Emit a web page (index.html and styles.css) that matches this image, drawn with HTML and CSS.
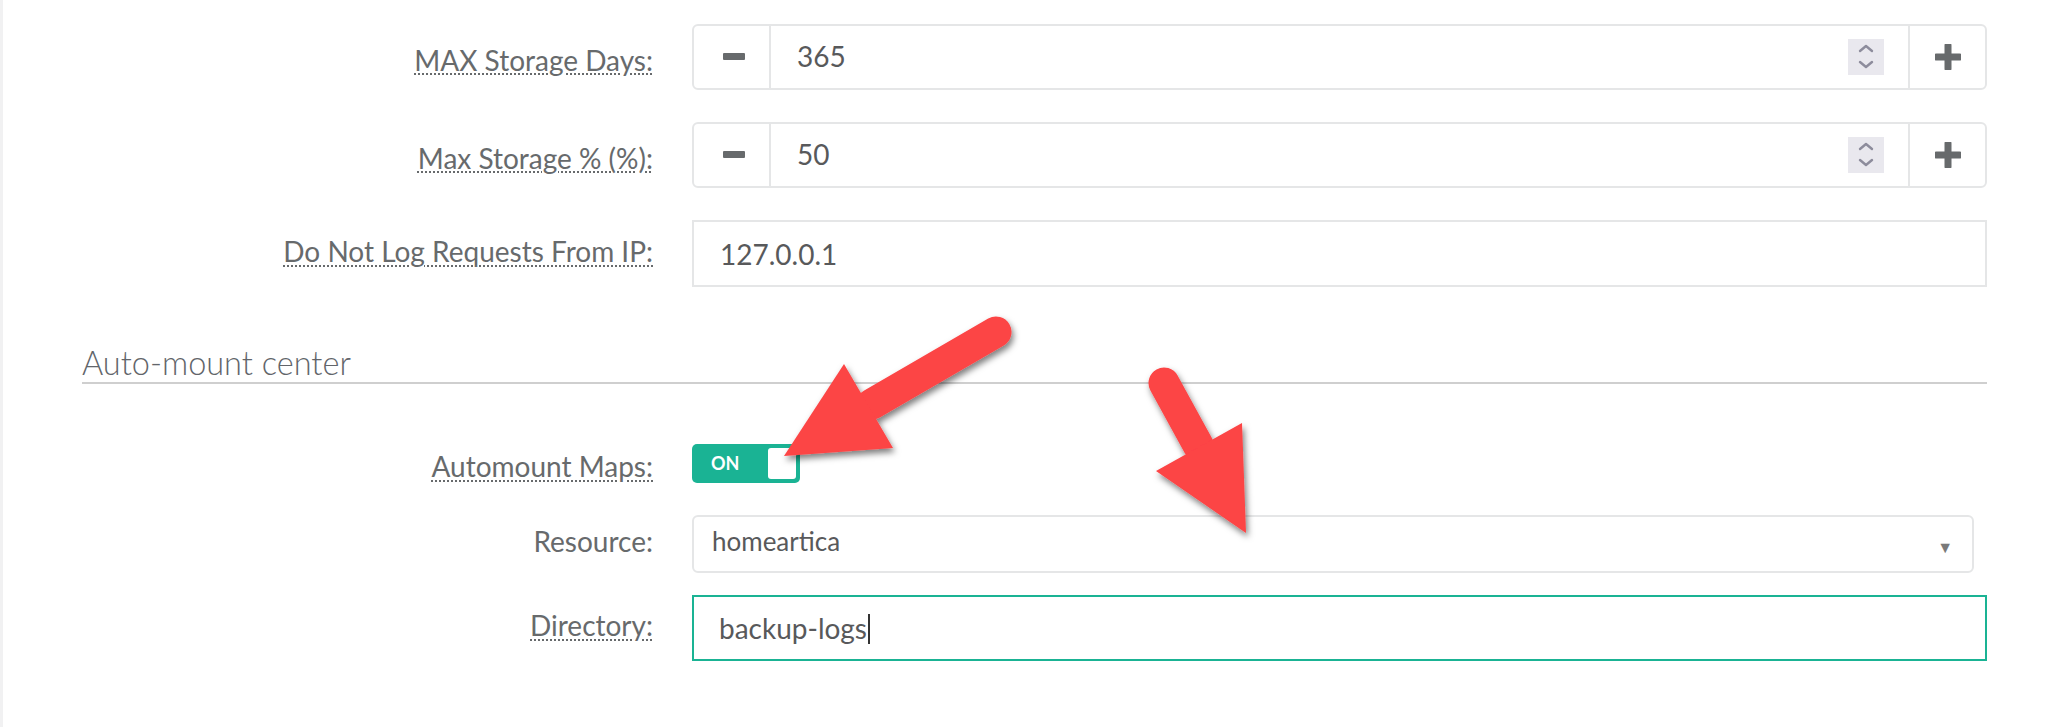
FILE: index.html
```html
<!DOCTYPE html>
<html lang="en">

<head>
    <meta charset="UTF-8">
    <meta name="viewport" content="width=device-width, initial-scale=1.0">
    <title>Statistics settings</title>
    <link rel="stylesheet" href="styles.css">
</head>

<body>
    <div class="page">
        <div class="panel">
            <form class="settings">
                <div class="form-row">
                    <label class="form-label"><span class="hint">MAX Storage Days:</span></label>
                    <div class="spin-group">
                        <span class="spin-btn minus"><i class="icon-minus"></i></span>
                        <div class="spin-field">
                            <span class="value">365</span>
                            <span class="spinner">
                                <svg width="16" height="26" viewBox="0 0 16 26"><path d="M2 7 L8 2 L14 7 M2 18 L8 23 L14 18" fill="none" stroke="#8d8c9c" stroke-width="2.4" stroke-linecap="round" stroke-linejoin="round"/></svg>
                            </span>
                        </div>
                        <span class="spin-btn plus">
                            <svg width="26" height="26" viewBox="0 0 26 26"><path d="M13 1.5 V24.5 M1.5 13 H24.5" stroke="#676a6c" stroke-width="7" stroke-linecap="round"/></svg>
                        </span>
                    </div>
                </div>

                <div class="form-row">
                    <label class="form-label"><span class="hint">Max Storage % (%):</span></label>
                    <div class="spin-group">
                        <span class="spin-btn minus"><i class="icon-minus"></i></span>
                        <div class="spin-field">
                            <span class="value">50</span>
                            <span class="spinner">
                                <svg width="16" height="26" viewBox="0 0 16 26"><path d="M2 7 L8 2 L14 7 M2 18 L8 23 L14 18" fill="none" stroke="#8d8c9c" stroke-width="2.4" stroke-linecap="round" stroke-linejoin="round"/></svg>
                            </span>
                        </div>
                        <span class="spin-btn plus">
                            <svg width="26" height="26" viewBox="0 0 26 26"><path d="M13 1.5 V24.5 M1.5 13 H24.5" stroke="#676a6c" stroke-width="7" stroke-linecap="round"/></svg>
                        </span>
                    </div>
                </div>

                <div class="form-row plain">
                    <label class="form-label"><span class="hint">Do Not Log Requests From IP:</span></label>
                    <div class="text-field">127.0.0.1</div>
                </div>

                <h3 class="section-title">Auto-mount center</h3>

                <div class="form-row toggle-row">
                    <label class="form-label"><span class="hint">Automount Maps:</span></label>
                    <div>
                        <span class="switch">
                            <span class="switch-text">ON</span>
                            <span class="switch-knob"></span>
                        </span>
                    </div>
                </div>

                <div class="form-row plain select-row">
                    <label class="form-label">Resource:</label>
                    <div class="select-field">
                        <span>homeartica</span>
                        <span class="caret">&#9660;</span>
                    </div>
                </div>

                <div class="form-row plain">
                    <label class="form-label"><span class="hint">Directory:</span></label>
                    <div class="text-field focused">backup-logs<span class="cursor"></span></div>
                </div>
            </form>
        </div>

        <!-- annotation arrows drawn over the form -->
        <svg class="arrows" width="2052" height="727" viewBox="0 0 2052 727">
            <defs>
                <filter id="shade" x="-20%" y="-20%" width="140%" height="140%">
                    <feDropShadow dx="2" dy="4" stdDeviation="3" flood-color="#000" flood-opacity="0.5"/>
                </filter>
            </defs>
            <g filter="url(#shade)" fill="#fc4445">
                <line x1="996" y1="332" x2="872" y2="404" stroke="#fc4445" stroke-width="31" stroke-linecap="round"/>
                <polygon points="784,456 844,364 893,448"/>
            </g>
            <g filter="url(#shade)" fill="#fc4445">
                <line x1="1164" y1="383" x2="1198" y2="445" stroke="#fc4445" stroke-width="31" stroke-linecap="round"/>
                <polygon points="1246,533 1156,471 1242,423"/>
            </g>
        </svg>
    </div>
</body>

</html>
```

FILE: styles.css
```css
body {
    margin: 0;
    background: #fff;
    font-family: Lato, "Open Sans", sans-serif;
    color: #676a6c;
}

.page {
    position: relative;
    width: 2052px;
    height: 727px;
    overflow: hidden;
    border-left: 3px solid #f1f1f2;
    box-sizing: border-box;
}

.panel {
    padding: 24px 65px 0 79px;
}

.settings {
    margin: 0;
}

.form-row {
    display: grid;
    grid-template-columns: 571px 1fr;
    column-gap: 39px;
    align-items: center;
    margin-bottom: 32px;
}

.form-label {
    text-align: right;
    font-size: 28px;
    line-height: 1.2;
    padding-top: 7px;
}

.form-row.plain .form-label {
    padding-top: 0;
    padding-bottom: 3px;
}

.hint {
    text-decoration: underline dotted #676a6c;
    text-decoration-thickness: 2px;
    text-underline-offset: 3px;
}

/* number input with -/+ buttons */
.spin-group {
    display: flex;
    height: 66px;
    border: 2px solid #e5e6e7;
    border-radius: 6px;
    box-sizing: border-box;
}

.spin-btn {
    flex: none;
    width: 75px;
    display: flex;
    align-items: center;
    justify-content: center;
}

.spin-btn.minus {
    border-right: 2px solid #e5e6e7;
}

.spin-btn.plus {
    border-left: 2px solid #e5e6e7;
}

.icon-minus {
    display: block;
    width: 22px;
    height: 7px;
    margin-left: 4px;
    margin-top: -2px;
    background: #676a6c;
    border-radius: 1px;
}

.spin-field {
    flex: 1;
    display: flex;
    align-items: center;
    padding: 0 24px 0 26px;
}

.value {
    font-size: 28px;
    line-height: 1.2;
    color: #58595b;
}

.spinner {
    margin-left: auto;
    width: 36px;
    height: 36px;
    background: #e9e8ee;
    display: flex;
    align-items: center;
    justify-content: center;
}

.text-field {
    height: 67px;
    border: 2px solid #e5e6e7;
    box-sizing: border-box;
    padding-left: 26px;
    display: flex;
    align-items: center;
    font-size: 28px;
    color: #58595b;
}

.text-field.focused {
    height: 66px;
    border-color: #1ab394;
    padding-left: 25px;
}

.cursor {
    display: inline-block;
    width: 2px;
    height: 30px;
    margin-left: 1px;
    margin-top: 2px;
    background: #333;
}

.section-title {
    margin: 57px 0 59px;
    font-size: 32.5px;
    font-weight: 300;
    line-height: 38px;
    color: #62656a;
    border-bottom: 2px solid #cfcfcf;
}

/* on/off switch */
.switch {
    display: flex;
    align-items: center;
    justify-content: space-between;
    width: 108px;
    height: 39px;
    box-sizing: border-box;
    padding: 4px 4px 4px 19px;
    background: #1ab394;
    border-radius: 5px;
}

.switch-text {
    font-size: 18px;
    font-weight: 700;
    color: #fff;
}

.switch-knob {
    width: 28px;
    height: 31px;
    background: #fff;
    border-radius: 3px;
}

.toggle-row {
    margin-bottom: 31px;
}

.select-row {
    margin-bottom: 22px;
}

.select-field {
    width: 1282px;
    height: 58px;
    box-sizing: border-box;
    border: 2px solid #e5e6e7;
    border-radius: 6px;
    display: flex;
    align-items: center;
    justify-content: space-between;
    padding: 0 19px 6px 18px;
    font-size: 26px;
    color: #58595b;
}

.caret {
    font-size: 16px;
    color: #7a7a7a;
    padding-top: 12px;
}

.arrows {
    position: absolute;
    top: 0;
    left: -3px;
    pointer-events: none;
}
```
